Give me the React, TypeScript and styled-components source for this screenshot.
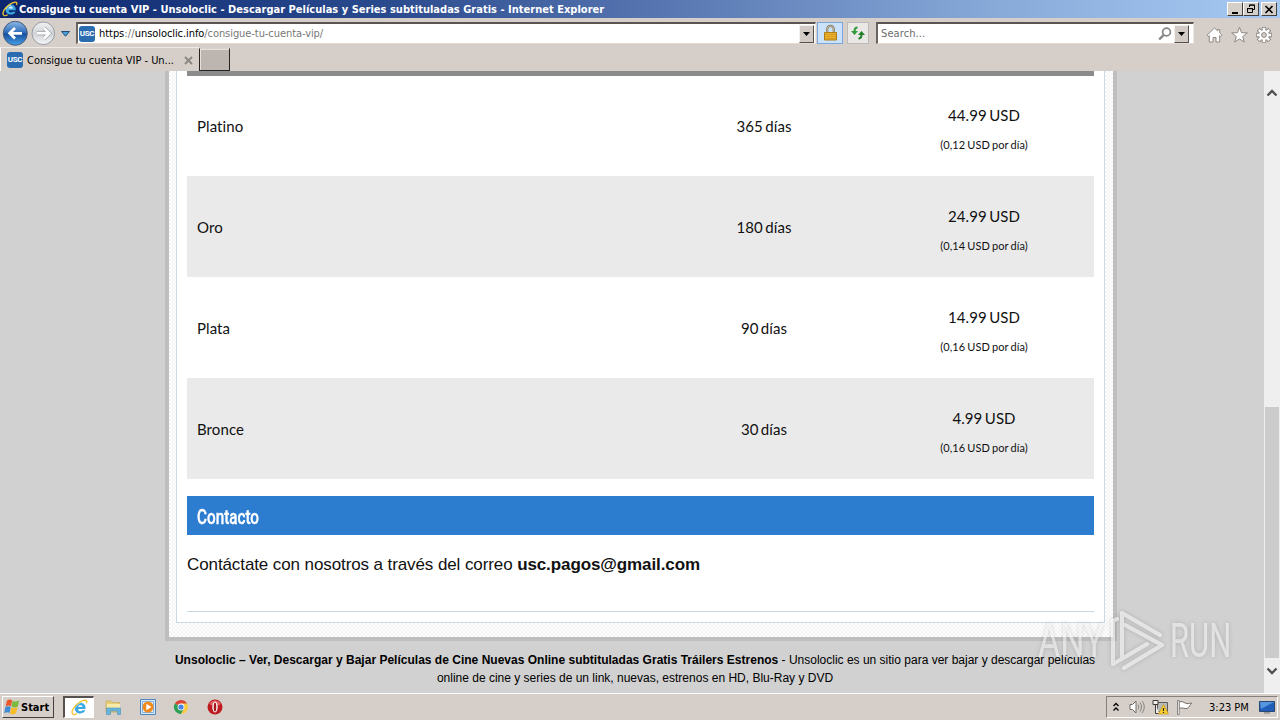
import React from "react";
import styled, { createGlobalStyle } from "styled-components";

const Global = createGlobalStyle`
  * { box-sizing: border-box; }
  body { margin: 0; overflow: hidden; background: #d1d1d1; }
  svg { display: block; flex: none; }
`;

const ui = `"DejaVu Sans Condensed", "DejaVu Sans", sans-serif`;

const Screen = styled.div`
  width: 1280px;
  height: 720px;
  display: flex;
  flex-direction: column;
  position: relative;
  overflow: hidden;
  font-family: ${ui};
  font-size: 11px;
  color: #000;
`;

const Label = styled.span<{ $ls?: number; $color?: string; $bold?: boolean; $size?: number }>`
  white-space: pre;
  letter-spacing: ${(p) => p.$ls ?? 0}px;
  color: ${(p) => p.$color ?? "#000"};
  font-weight: ${(p) => (p.$bold ? 700 : 400)};
  font-size: ${(p) => p.$size ?? 11}px;
`;

/* Window chrome */
const TitleBar = styled.header`
  flex: none;
  height: 18px;
  display: flex;
  align-items: center;
  padding: 0 3px 0 2px;
  background: linear-gradient(90deg, #0c276e 0%, #2a4a8e 30%, #5877b2 52%, #88aad9 78%, #a6caf3 100%);
`;
const Title = styled.div`
  flex: 1;
  display: flex;
  padding-left: 1px;
`;
const WinButtons = styled.div`
  display: flex;
`;
const WinButton = styled.button<{ $gap?: boolean }>`
  width: 16px;
  height: 14px;
  padding: 0;
  margin-left: ${(p) => (p.$gap ? 2 : 0)}px;
  display: grid;
  place-items: center;
  background: #d5cfc9;
  border: 1px solid;
  border-color: #fff #404040 #404040 #fff;
`;
const Toolbar = styled.div`
  flex: none;
  height: 29px;
  display: flex;
  align-items: flex-start;
  padding: 4px 6px 0 1px;
  background: #d6cfc9;
`;
const NavButtons = styled.div`
  display: flex;
  width: 75px;
  height: 25px;
  margin-top: -2px;
`;
const Field = styled.div<{ $w: number; $left?: number }>`
  width: ${(p) => p.$w}px;
  height: 22px;
  margin-left: ${(p) => p.$left ?? 0}px;
  display: flex;
  align-items: center;
  background: #fff;
  border: 1px solid;
  border-width: 2px 1px 1px 2px;
  border-color: #5b5450 #efe9e4 #e3d9d2 #6b6561;
  padding-left: 1px;
`;
const Fill = styled.div<{ $pad?: number }>`
  flex: 1;
  display: flex;
  align-items: center;
  padding-left: ${(p) => p.$pad ?? 0}px;
`;
const Drop = styled.div<{ $inset?: boolean }>`
  width: 15px;
  height: 18px;
  margin: 0 ${(p) => (p.$inset ? 4 : 1)}px 0 ${(p) => (p.$inset ? 2 : 0)}px;
  display: grid;
  place-items: center;
  background: #d2cbc5;
  border: 1px solid;
  border-color: #f4f0ec #55504c #55504c #f4f0ec;
`;
const ToolButton = styled.div<{ $w: number; $left: number; $active?: boolean }>`
  width: ${(p) => p.$w}px;
  height: 22px;
  margin-left: ${(p) => p.$left}px;
  display: grid;
  place-items: center;
  background: ${(p) => (p.$active ? "#cbe2fb" : "#e9e8e6")};
  border: 1px solid ${(p) => (p.$active ? "#7da7dc" : "#bdbab7")};
`;
const CommandIcons = styled.div`
  display: flex;
  gap: 6px;
  margin: 4px 0 0 11px;
`;
const Badge = styled.div`
  flex: none;
  width: 16px;
  height: 16px;
  border-radius: 3px;
  background: #2b6cb0;
  color: #fff;
  font: 700 8px/16px Roboto, sans-serif;
  letter-spacing: -0.3px;
  text-align: center;
`;
const TabStrip = styled.div`
  flex: none;
  height: 24px;
  display: flex;
  background: #d6cfc9;
`;
const Tab = styled.div`
  width: 199px;
  height: 24px;
  display: flex;
  align-items: center;
  padding: 1px 6px 0 6px;
  gap: 4px;
  border-top: 1px solid #eeeae6;
  border-left: 1px solid #fff;
`;
const NewTab = styled.div`
  width: 31px;
  height: 23px;
  margin-top: 1px;
  background: #bdb5b0;
  border: 1px solid #262220;
  border-top-color: #d8d2cc;
  box-shadow: inset 1px 1px 0 #e6e0dc;
`;

/* Page */
const Viewport = styled.div`
  flex: 1;
  min-height: 0;
  display: flex;
  background: #d1d1d1;
`;
const Page = styled.main`
  flex: 1;
  display: flex;
  flex-direction: column;
  padding-left: 165px;
`;
const Frame = styled.div`
  width: 952px;
  height: 570px;
  border: 4px solid #bebebe;
  border-top: 0;
  padding: 0 8px 14px 7px;
  background: repeating-conic-gradient(#fff 0 25%, #f3f3f3 0 50%) 0 0 / 4px 4px;
`;
const Sheet = styled.div`
  height: 552px;
  width: 929px;
  display: flex;
  flex-direction: column;
  padding: 0 10px;
  background: #fff;
  border: 1px solid #cbd9e2;
  border-top: 0;
`;
const TableEdge = styled.div`
  flex: none;
  height: 5px;
  background: #8b8b8b;
`;
const Row = styled.div<{ $alt?: boolean; $h: number }>`
  flex: none;
  height: ${(p) => p.$h}px;
  display: grid;
  grid-template-columns: 467px 220px 220px;
  align-items: center;
  background: ${(p) => (p.$alt ? "#eaeaea" : "#fff")};
  font: 15px/30px Lato, sans-serif;
  letter-spacing: 0.08px;
  color: #111;
`;
const Cell = styled.div<{ $center?: boolean; $drop?: boolean }>`
  padding: ${(p) => (p.$drop ? 8 : 0)}px 0 0 ${(p) => (p.$center ? 0 : 10)}px;
  text-align: ${(p) => (p.$center ? "center" : "left")};
  word-spacing: -1.5px;
`;
const Small = styled.div`
  font-size: 11px;
  line-height: 30px;
  word-spacing: -0.8px;
`;
const Heading = styled.h2`
  flex: none;
  height: 39px;
  margin: 17px 0 0;
  padding-left: 10px;
  background: #2c7ccf;
  color: #fff;
  font: 500 20.5px/42px Roboto, sans-serif;
`;
const Condensed = styled.span`
  display: inline-block;
  transform: scaleX(0.745);
  transform-origin: left;
  -webkit-text-stroke: 0.35px #fff;
`;
const Contact = styled.p`
  flex: none;
  height: 77px;
  margin: 0;
  padding-top: 19px;
  border-bottom: 1px solid #c9d8e1;
  font: 17px/21px "Liberation Sans", sans-serif;
  letter-spacing: -0.1px;
  color: #111;
`;
const Footer = styled.footer`
  width: 940px;
  padding: 10px 0 0;
  text-align: center;
  font: 12px/18px "Liberation Sans", sans-serif;
  color: #111;
`;
const ScrollBar = styled.div`
  width: 16px;
  display: flex;
  flex-direction: column;
  align-items: center;
  background: #efefef;
`;
const Arrow = styled.div<{ $h: number; $top: number }>`
  height: ${(p) => p.$h}px;
  padding-top: ${(p) => p.$top}px;
`;
const Thumb = styled.div`
  width: 14px;
  height: 251px;
  background: #cbcbcb;
`;

/* Taskbar */
const TaskBar = styled.footer`
  flex: none;
  height: 27px;
  display: flex;
  align-items: flex-start;
  padding: 2px 2px 0;
  background: #d6cfc9;
  border-top: 1px solid #fff;
`;
const Start = styled.div`
  width: 52px;
  height: 22px;
  display: flex;
  align-items: center;
  padding-left: 1px;
  border: 1px solid;
  border-color: #fff #45403d #45403d #fff;
`;
const Task = styled.div`
  width: 31px;
  height: 22px;
  margin: 0 9px;
  display: grid;
  place-items: center;
  background: #fff;
  border: 1px solid;
  border-width: 2px 1px 1px 2px;
  border-color: #56514e #fff #fff #56514e;
`;
const Launch = styled.div`
  flex: 1;
  display: flex;
  align-items: center;
  height: 22px;
  padding-left: 1px;
  gap: 17.500px;
`;
const Tray = styled.div`
  width: 172px;
  height: 22px;
  display: flex;
  align-items: center;
  padding-left: 6px;
  border: 1px solid;
  border-color: #86807c #fff #fff #86807c;
`;
const TrayIcons = styled.div`
  display: flex;
  align-items: center;
  gap: 7px;
  margin-left: 10px;
`;
const Clock = styled.div`
  display: flex;
  width: 50px;
  margin-left: 16px;
`;
const Watermark = styled.div`
  position: absolute;
  left: 1038px;
  top: 608px;
  width: 200px;
  height: 66px;
  display: flex;
  align-items: center;
  color: rgba(255, 255, 255, 0.55);
  font: 400 48px/66px Roboto, sans-serif;
  filter: drop-shadow(0 0 2px rgba(0, 0, 0, 0.28));
`;
const MarkWord = styled.span<{ $w: number; $sx: number }>`
  width: ${(p) => p.$w}px;
  white-space: nowrap;
  transform: scaleX(${(p) => p.$sx});
  transform-origin: left;
`;

const IeIcon = ({ size = 16 }: { size?: number }) => (
  <svg width={size} height={size} viewBox="0 0 16 16" fill="none">
    <path d="M4 9.300h9.700c.3-3.600-1.800-5.800-4.900-5.800-3.200 0-5.200 2.100-5.200 5.100s2 5 5.200 5c2.400 0 4-1.100 4.700-2.900h-2.900c-.4.500-.9.800-1.700.8-1.300 0-2.100-.8-2.200-2.200" fill="#3aa7e4" />
    <path d="M6.600 7.500c.2-1.200 1-1.900 2.200-1.900 1.300 0 2 .7 2.100 1.900z" fill="#e5f4fd" />
    <path d="M4.200 8c.8-2.100 2.500-3.600 4.600-3.700" stroke="#9edbf8" strokeWidth="1" />
    <path d="M1.700 14.300C-.5 12 3 6.500 7.500 3.500c3.300-2.300 6.700-3 7.300-1.500.2.600.1 1.200-.3 2" stroke="#f2c530" strokeWidth="1.300" />
    <path d="M1.700 14.300c1 .8 2.800.2 4-.5" stroke="#f2c530" strokeWidth="1.200" />
  </svg>
);

const BackIcon = () => (
  <svg width="27" height="26" viewBox="0 0 27 26">
    <defs>
      <linearGradient id="back" x2="0" y2="1">
        <stop offset="0" stopColor="#8db8e5" />
        <stop offset=".48" stopColor="#2c6bb9" />
        <stop offset=".52" stopColor="#164d9c" />
        <stop offset="1" stopColor="#46a1ea" />
      </linearGradient>
    </defs>
    <circle cx="14.300" cy="13.300" r="12" fill="url(#back)" stroke="#4a5c78" />
    <path d="M21 13.300H9.500M14 8.100l-5.300 5.200 5.300 5.200" stroke="#fff" strokeWidth="2.800" fill="none" />
  </svg>
);
const ForwardIcon = () => (
  <svg width="28" height="26" viewBox="0 0 28 26">
    <defs>
      <linearGradient id="fwd" x2="0" y2="1">
        <stop offset="0" stopColor="#f3f3f3" />
        <stop offset=".5" stopColor="#cfd2d6" />
        <stop offset="1" stopColor="#f5f6f7" />
      </linearGradient>
    </defs>
    <circle cx="15.300" cy="13.300" r="11.300" fill="url(#fwd)" stroke="#989ea5" />
    <path d="M9 13.300h11.500M16 8.100l5.300 5.200-5.300 5.200" stroke="#a0a6ad" strokeWidth="4" fill="none" />
    <path d="M9 13.300h11.500M16 8.100l5.300 5.200-5.300 5.200" stroke="#fff" strokeWidth="2.600" fill="none" />
  </svg>
);
const HistoryIcon = () => (
  <svg width="19" height="26" viewBox="0 0 19 26">
    <path d="M5.500 11.500h8l-4 4.700z" fill="#49a0d8" stroke="#1f4d78" />
  </svg>
);
const Triangle = () => (
  <svg width="7" height="4" viewBox="0 0 7 4"><path d="M0 0h7L3.500 4z" fill="#000" /></svg>
);
const LockIcon = () => (
  <svg width="15" height="18" viewBox="0 0 15 18">
    <path d="M4.200 8.500V5.200a3.300 3.300 0 0 1 6.600 0v3.300" fill="none" stroke="#7d7057" strokeWidth="2.200" />
    <path d="M4.200 8.500V5.200a3.300 3.300 0 0 1 6.600 0v3.300" fill="none" stroke="#e0d7bd" strokeWidth=".8" />
    <path d="M1.500 8.500h12v7.500h-12z" fill="#efb62c" stroke="#b07d18" />
    <path d="M2 10.500h11M2 12.500h11M2 14.500h11" stroke="#cc931c" strokeWidth=".8" />
  </svg>
);
const RefreshIcon = () => (
  <svg width="16" height="14" viewBox="0 0 16 14" fill="none">
    <path d="M7.500 1.500C5.500 1.500 4.500 3 4.500 5.500" stroke="#2f9a37" strokeWidth="2" />
    <path d="M1 5h7L4.500 9z" fill="#2f9a37" />
    <path d="M8.500 12.500c2 0 3-1.500 3-4" stroke="#23802b" strokeWidth="2" />
    <path d="M8 9h7l-3.500-4z" fill="#23802b" />
  </svg>
);
const SearchIcon = () => (
  <svg width="14" height="14" viewBox="0 0 14 14" fill="none" stroke="#858585">
    <circle cx="8.500" cy="5" r="3.900" strokeWidth="1.700" />
    <path d="M5.600 8 1.200 12.500" strokeWidth="2.500" />
  </svg>
);
const HomeIcon = () => (
  <svg width="19" height="18" viewBox="0 0 19 18">
    <path d="M9.500 2 2 9.200l1.300 1.300 1-.9V16h3.700v-4.500h3V16h3.700V9.600l1 .9L17 9.200l-2.300-2.300V3.500h-2v1.400z" fill="#fff" stroke="#8e8984" />
  </svg>
);
const StarIcon = () => (
  <svg width="19" height="18" viewBox="0 0 19 18">
    <path d="m9.500 1.300 2 5.400 5.800.2-4.600 3.600 1.600 5.600-4.800-3.200-4.800 3.200 1.600-5.600-4.600-3.600 5.800-.2z" fill="#fff" stroke="#8e8984" />
  </svg>
);
const GearIcon = () => (
  <svg width="18" height="18" viewBox="0 0 18 18">
    <g stroke="#8e8984" strokeWidth="4.400">
      <path d="M9 1v16M1 9h16M3.300 3.300l11.400 11.400M14.700 3.300 3.300 14.700" />
    </g>
    <g stroke="#fff" strokeWidth="2.600">
      <path d="M9 1.800v14.400M1.800 9h14.400M3.900 3.900l10.200 10.200M14.100 3.900 3.900 14.100" />
    </g>
    <circle cx="9" cy="9" r="4.800" fill="#fff" />
    <circle cx="9" cy="9" r="2.400" fill="#d6cfc9" stroke="#8e8984" />
  </svg>
);
const Chevron = ({ down }: { down?: boolean }) => (
  <svg width="12" height="8" viewBox="0 0 12 8" fill="none" stroke="#505050" strokeWidth="2.300">
    <path d={down ? "M1.500 1.500 6 6l4.500-4.500" : "M1.500 6.500 6 2l4.500 4.500"} />
  </svg>
);
const StartFlag = () => (
  <svg width="17" height="16" viewBox="0 0 17 16">
    <path d="M3 1.500c2-1.300 3.800-1.200 5.200-.2L7 7.300c-1.600-1-3.400-1-5.400.2z" fill="#e8572b" />
    <path d="M8.700 1.700c1.700 1 3.900 1 6.600-.5L13.800 7.500c-2.200 1.400-4.500 1.300-6.300.1z" fill="#7dba3c" />
    <path d="M1.400 8.100c2-1.200 3.800-1.100 5.400-.1l-1.400 6c-1.500-.9-3.300-.9-5.200.2z" fill="#3f8bd6" />
    <path d="M7.300 8.400c1.700 1 4 1 6.300-.3l-1.500 6.200c-2 1.300-4.400 1.200-6.200.1z" fill="#f5bd2c" />
  </svg>
);
const FolderIcon = () => (
  <svg width="18" height="18" viewBox="0 0 18 18">
    <path d="M2 3h5l1 1.500h7.500V14H2z" fill="#e8cf76" stroke="#c5a957" strokeWidth=".7" />
    <path d="M3 6h13v7H3z" fill="#f8eaa8" />
    <path d="M2.500 10h14v6.500h-3V13h-7v3.500h-4z" fill="#67b4dc" stroke="#4e91b9" strokeWidth=".6" />
  </svg>
);
const MediaIcon = () => (
  <svg width="16" height="16" viewBox="0 0 16 16">
    <path d="M.5.500h15v15H.5z" fill="#d6e7f7" stroke="#4e86c1" />
    <path d="M2.500 2.500h11v11h-11z" fill="#e9f3fc" stroke="#87b1dc" />
    <circle cx="8" cy="8" r="5.500" fill="#f08a1c" />
    <path d="M6.300 4.800 11.500 8l-5.200 3.200z" fill="#fff" />
  </svg>
);
const ChromeIcon = () => (
  <svg width="16" height="16" viewBox="0 0 16 16">
    <path d="M8 8 1.900 4.500a7 7 0 0 1 12.200 0z" fill="#dc4437" />
    <path d="M8 8 1.900 4.500A7 7 0 0 0 8 15l3-5z" fill="#2f9e55" />
    <path d="M8 8v-3.500h6.100A7 7 0 0 1 8 15l3-5z" fill="#f7cb45" />
    <circle cx="8" cy="8" r="3.400" fill="#fff" />
    <circle cx="8" cy="8" r="2.600" fill="#4782e5" />
  </svg>
);
const OperaIcon = () => (
  <svg width="16" height="16" viewBox="0 0 16 16">
    <circle cx="8" cy="8" r="7.500" fill="#bd1b20" />
    <path d="M2 5a7 7 0 0 1 12 0c-3 2-8 2-12 0z" fill="#dd6060" />
    <ellipse cx="8" cy="8" rx="2.700" ry="5.400" fill="#fff" />
    <ellipse cx="8" cy="8" rx="1.300" ry="4.600" fill="#a8181c" />
  </svg>
);
const TrayUp = () => (
  <svg width="6" height="10" viewBox="0 0 6 10" fill="none" stroke="#000" strokeWidth="1.300">
    <path d="M.5 4 3 1.500 5.500 4M.5 8.500 3 6l2.500 2.500" />
  </svg>
);
const SpeakerIcon = () => (
  <svg width="16" height="14" viewBox="0 0 16 14" fill="none">
    <path d="M1 4.500h2.500L7 1v12L3.500 9.500H1z" fill="#fff" stroke="#706c68" />
    <path d="M9 4.500c1 1.500 1 3.500 0 5M11 2.500c2 2.500 2 6.500 0 9M13 1c3 3.500 3 8.500 0 12" stroke="#85817d" />
  </svg>
);
const NetworkIcon = () => (
  <svg width="17" height="16" viewBox="0 0 17 16">
    <path d="M5.500 3.500h10v9h-10z" fill="#b9b9b9" stroke="#605c58" />
    <path d="M1 1.500h5v4H1zM3.500 5.500v9h4" fill="#eee" stroke="#403c38" />
    <path d="m11.500 5.500 5 9.500h-10z" fill="#fbd02c" stroke="#c6961a" strokeWidth=".7" />
    <path d="M11.500 9v3M11.500 13v1" stroke="#222" strokeWidth="1.200" />
  </svg>
);
const FlagIcon = () => (
  <svg width="17" height="15" viewBox="0 0 17 15">
    <path d="M3 2c3-1.200 4.500.3 6.500 1.200C11.500 4 13 3.500 15.500 3c-1.500 2-2 4-4.500 5.500C8.500 9 6 7 3 8.500z" fill="#fff" stroke="#716d69" />
    <path d="M1.500.500h1.700v14H1.500z" fill="#fff" stroke="#716d69" strokeWidth=".8" />
  </svg>
);
const MonitorIcon = () => (
  <svg width="16" height="15" viewBox="0 0 16 15">
    <path d="M.5 1.500h15v10H.5z" fill="#1f5fbb" stroke="#29466f" />
    <path d="M1 2h14L2 9z" fill="#5596df" />
    <path d="M5 12h6v1.800H5z" fill="#9b9b9b" />
  </svg>
);
const PlayMark = () => (
  <svg width="62" height="66" viewBox="0 0 62 66" fill="none" stroke="rgba(255,255,255,.6)" strokeWidth="4" strokeLinecap="round" strokeLinejoin="round">
    <path d="M52 27 14 5v44M9 11l-4 2v43l34-20M16 60l38-23-37-20" />
  </svg>
);

const plans = [
  { name: "Platino", days: "365 días", price: "44.99 USD", daily: "(0,12 USD por día)" },
  { name: "Oro", days: "180 días", price: "24.99 USD", daily: "(0,14 USD por día)" },
  { name: "Plata", days: "90 días", price: "14.99 USD", daily: "(0,16 USD por día)" },
  { name: "Bronce", days: "30 días", price: "4.99 USD", daily: "(0,16 USD por día)" },
];

export default function App() {
  return (
    <Screen>
      <Global />
      <TitleBar>
        <IeIcon />
        <Title>
          <Label $bold $color="#fff" $ls={0.015}>Consigue tu cuenta VIP - Unsoloclic - Descargar Películas y Series subtituladas Gratis - Internet Explorer</Label>
        </Title>
        <WinButtons>
          <WinButton aria-label="Minimize">
            <svg width="10" height="9"><path d="M2 8h6" stroke="#000" strokeWidth="2" /></svg>
          </WinButton>
          <WinButton aria-label="Restore">
            <svg width="10" height="10" fill="none" stroke="#000"><path d="M3.500 3V1h5v4.500h-2M3 1.200h6M1.500 4.500h5v4h-5zM1 4.700h6" /></svg>
          </WinButton>
          <WinButton $gap aria-label="Close">
            <svg width="10" height="9"><path d="m1.500 1 7 7M8.500 1l-7 7" stroke="#000" strokeWidth="1.600" /></svg>
          </WinButton>
        </WinButtons>
      </TitleBar>
      <Toolbar>
        <NavButtons><BackIcon /><ForwardIcon /><HistoryIcon /></NavButtons>
        <Field $w={740}>
          <Badge>USC</Badge>
          <Fill $pad={4}>
            <Label $ls={-0.05}>https</Label>
            <Label $color="#777" $ls={0.2}>://</Label>
            <Label $ls={-0.08}>unsoloclic.info</Label>
            <Label $color="#777" $ls={-0.07}>/consigue-tu-cuenta-vip/</Label>
          </Fill>
          <Drop><Triangle /></Drop>
        </Field>
        <ToolButton $w={26} $left={1} $active><LockIcon /></ToolButton>
        <ToolButton $w={22} $left={4}><RefreshIcon /></ToolButton>
        <Field $w={318} $left={7}>
          <Fill $pad={2}><Label $color="#6b6b6b" $ls={0.1}>Search...</Label></Fill>
          <SearchIcon />
          <Drop $inset><Triangle /></Drop>
        </Field>
        <CommandIcons><HomeIcon /><StarIcon /><GearIcon /></CommandIcons>
      </Toolbar>
      <TabStrip>
        <Tab>
          <Badge>USC</Badge>
          <Fill><Label $ls={-0.03}>Consigue tu cuenta VIP - Un...</Label></Fill>
          <svg width="9" height="9"><path d="m1 1 7 7M8 1 1 8" stroke="#8b8682" strokeWidth="1.900" /></svg>
        </Tab>
        <NewTab />
      </TabStrip>
      <Viewport>
        <Page>
          <Frame>
            <Sheet>
              <TableEdge />
              {plans.map((p, i) => (
                <Row key={p.name} $alt={i % 2 === 1} $h={i === 0 ? 100 : 101}>
                  <Cell>{p.name}</Cell>
                  <Cell $center>{p.days}</Cell>
                  <Cell $center $drop>{p.price}<Small>{p.daily}</Small></Cell>
                </Row>
              ))}
              <Heading><Condensed>Contacto</Condensed></Heading>
              <Contact>Contáctate con nosotros a través del correo <b>usc.pagos@gmail.com</b></Contact>
            </Sheet>
          </Frame>
          <Footer>
            <Label $bold $size={12} $ls={0.01}>Unsoloclic – Ver, Descargar y Bajar Películas de Cine Nuevas Online subtituladas Gratis Tráilers Estrenos</Label>
            <Label $size={12}> - Unsoloclic es un sitio para ver bajar y descargar películas</Label>
            <br />
            <Label $size={12}>online de cine y series de un link, nuevas, estrenos en HD, Blu-Ray y DVD</Label>
          </Footer>
        </Page>
        <ScrollBar>
          <Arrow $h={336} $top={18}><Chevron /></Arrow>
          <Thumb />
          <Arrow $h={34} $top={9}><Chevron down /></Arrow>
        </ScrollBar>
      </Viewport>
      <TaskBar>
        <Start><StartFlag /><Label $bold>Start</Label></Start>
        <Task><IeIcon size={17} /></Task>
        <Launch>
          <FolderIcon /><MediaIcon /><ChromeIcon /><OperaIcon />
        </Launch>
        <Tray>
          <TrayUp />
          <TrayIcons><SpeakerIcon /><NetworkIcon /><FlagIcon /></TrayIcons>
          <Clock><Label>3:23 PM</Label></Clock>
          <MonitorIcon />
        </Tray>
      </TaskBar>
      <Watermark>
        <MarkWord $w={70} $sx={0.71}>ANY</MarkWord>
        <PlayMark />
        <MarkWord $w={64} $sx={0.645}>RUN</MarkWord>
      </Watermark>
    </Screen>
  );
}
